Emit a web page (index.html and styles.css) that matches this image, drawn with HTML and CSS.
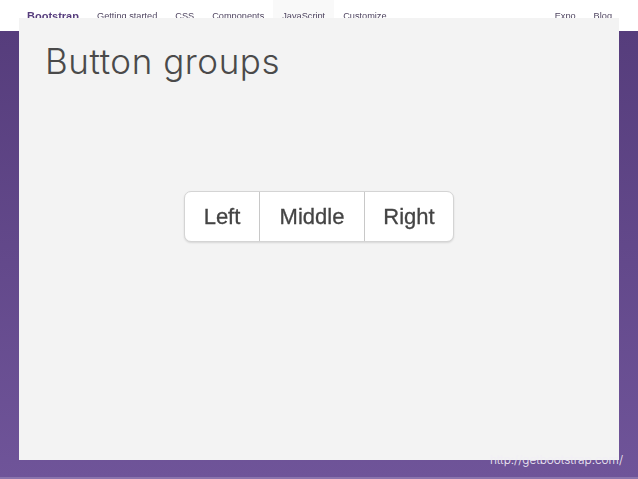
FILE: index.html
```html
<!DOCTYPE html>
<html lang="en">
<head>
<meta charset="utf-8">
<title>Button groups</title>
<link rel="stylesheet" href="styles.css">
</head>
<body>
<div class="slide">
  <header class="topbar">
    <span class="brand">Bootstrap</span>
    <nav class="nav">
      <a class="nav-item">Getting started</a>
      <a class="nav-item">CSS</a>
      <a class="nav-item">Components</a>
      <a class="nav-item active">JavaScript</a>
      <a class="nav-item">Customize</a>
    </nav>
    <nav class="nav nav-right">
      <a class="nav-item">Expo</a>
      <a class="nav-item">Blog</a>
    </nav>
  </header>
  <main class="stage">
    <section class="panel">
      <h1 class="title">Button groups</h1>
      <div class="btn-group">
        <span class="btn btn-left">Left</span>
        <span class="btn btn-middle">Middle</span>
        <span class="btn btn-right">Right</span>
      </div>
    </section>
    <span class="source">http://getbootstrap.com/</span>
  </main>
</div>
</body>
</html>
```
FILE: styles.css
```css
* { box-sizing: border-box; }
html, body { margin: 0; padding: 0; }
body { width: 638px; height: 479px; overflow: hidden; font-family: "Liberation Sans", Arial, sans-serif; }
.slide { width: 638px; height: 479px; display: flex; flex-direction: column; background: #fff; }
.topbar { height: 31px; flex: none; display: flex; align-items: flex-start; padding-left: 27px; background: #fff; color: #563d7c; filter: blur(0.3px); }
.brand { font-size: 11px; font-weight: bold; line-height: 12px; padding-top: 10px; width: 61px; }
.nav { display: flex; }
.nav-item { font-size: 9.2px; line-height: 12px; padding: 10px 9px 9px; color: #4f4560; height: 31px; }
.nav-right { margin-left: auto; padding-right: 17px; }
.active { background: #f9f9f9; }
.stage { flex: 1; position: relative; padding: 0 19px; background: linear-gradient(#563d7c, #6f5499); border-bottom: 2px solid #8a74ad; }
.panel { margin-top: -13px; width: 600px; height: 442px; background: #f3f3f3; display: flex; flex-direction: column; align-items: center; position: relative; }
.title { align-self: flex-start; margin: 0; padding: 23px 0 0 26px; font-family: Inter, "Open Sans", sans-serif; font-weight: 300; font-size: 35px; line-height: 41px; letter-spacing: 0.55px; color: #4a4a4a; }
.btn-group { margin-top: 109px; display: flex; height: 51px; background: #fff; border: 1px solid #d4d4d4; border-radius: 7px; box-shadow: 0 1px 2px rgba(0,0,0,.12); }
.btn { display: flex; align-items: center; justify-content: center; font-size: 22px; color: #444; -webkit-text-stroke: 0.3px #444; filter: blur(0.3px); }
.btn-left { width: 74px; }
.btn-middle { width: 106px; border-left: 1px solid #c8c8c8; border-right: 1px solid #c8c8c8; }
.btn-right { width: 88px; }
.source { position: absolute; right: 15px; top: 421px; font-family: Inter, "Open Sans", sans-serif; font-weight: 300; font-size: 11.8px; line-height: 16px; color: #f2eff6; }
```
